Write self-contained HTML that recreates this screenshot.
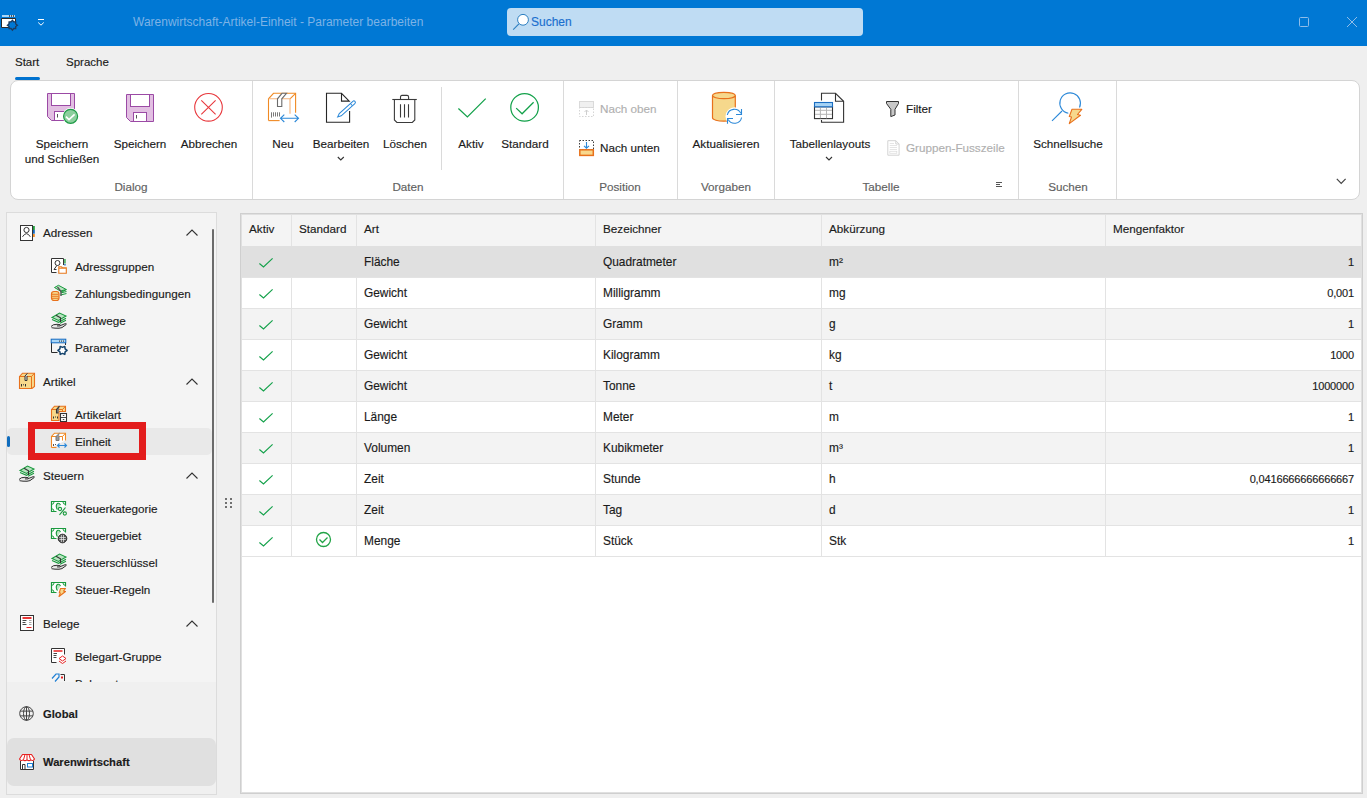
<!DOCTYPE html>
<html><head><meta charset="utf-8">
<style>
*{margin:0;padding:0;box-sizing:border-box}
html,body{width:1367px;height:798px;overflow:hidden;background:#efefef;font-family:"Liberation Sans",sans-serif;color:#1b1b1b}
.a{position:absolute}
.t{position:absolute;white-space:nowrap;font-size:11.7px;line-height:12px;height:12px;-webkit-text-stroke:0.15px currentColor}
.c{text-align:center;width:160px}
.g{color:#616161}
.d{color:#b0b0b0}
svg{position:absolute;overflow:visible}
#title{left:0;top:0;width:1367px;height:46px;background:#0078d4}
#ribbon{left:10px;top:80px;width:1350px;height:120px;background:#fff;border:1px solid #d4d4d4;border-radius:8px}
.vs{position:absolute;width:1px;background:#dadada}
#side{left:6px;top:212px;width:211px;height:583px;background:#f4f4f4;border:1px solid #dcdcdc}
#grid{left:240px;top:213px;width:1123px;height:581px;background:#fff;border:1px solid #cfcfcf;box-shadow:inset 0 0 0 1px #e0e0e0}
.row{position:absolute;left:242px;width:1119px;height:31px;border-bottom:1px solid #e3e3e3}
.cs{position:absolute;width:1px;background:#e3e3e3}
</style></head><body>
<!-- TITLE BAR -->
<div id="title" class="a"></div>
<div class="t" style="left:133px;top:16px;color:#7db3e6;font-size:12px;-webkit-text-stroke:0">Warenwirtschaft-Artikel-Einheit - Parameter bearbeiten</div>
<div class="a" style="left:507px;top:8px;width:356px;height:28px;background:#bfdcf3;border-radius:4px"></div>
<div class="t" style="left:531px;top:16px;color:#1a6fcf;font-size:12px">Suchen</div>

<!-- TABS -->
<div class="t" style="left:15px;top:56px;font-size:11.5px">Start</div>
<div class="t" style="left:66px;top:56px;font-size:11.5px">Sprache</div>
<div class="a" style="left:15px;top:77px;width:25px;height:3px;background:#0072cf;border-radius:2px"></div>

<!-- RIBBON -->
<div id="ribbon" class="a"></div>
<div class="vs" style="left:252px;top:81px;height:118px"></div>
<div class="vs" style="left:563px;top:81px;height:118px"></div>
<div class="vs" style="left:677px;top:81px;height:118px"></div>
<div class="vs" style="left:774px;top:81px;height:118px"></div>
<div class="vs" style="left:1018px;top:81px;height:118px"></div>
<div class="vs" style="left:1116px;top:81px;height:118px"></div>
<div class="vs" style="left:441px;top:87px;height:83px"></div>

<div class="t c" style="left:-18px;top:138px">Speichern</div>
<div class="t c" style="left:-18px;top:153px">und Schließen</div>
<div class="t c" style="left:60px;top:138px">Speichern</div>
<div class="t c" style="left:129px;top:138px">Abbrechen</div>
<div class="t c g" style="left:51px;top:181px">Dialog</div>
<div class="t c" style="left:203px;top:138px">Neu</div>
<div class="t c" style="left:261px;top:138px">Bearbeiten</div>
<div class="t c" style="left:325px;top:138px">Löschen</div>
<div class="t c" style="left:391px;top:138px">Aktiv</div>
<div class="t c" style="left:445px;top:138px">Standard</div>
<div class="t c g" style="left:328px;top:181px">Daten</div>
<div class="t d" style="left:600px;top:103px">Nach oben</div>
<div class="t" style="left:600px;top:142px">Nach unten</div>
<div class="t c g" style="left:540px;top:181px">Position</div>
<div class="t c" style="left:646px;top:138px">Aktualisieren</div>
<div class="t c g" style="left:646px;top:181px">Vorgaben</div>
<div class="t c" style="left:750px;top:138px">Tabellenlayouts</div>
<div class="t" style="left:906px;top:103px">Filter</div>
<div class="t d" style="left:906px;top:142px">Gruppen-Fusszeile</div>
<div class="t c g" style="left:801px;top:181px">Tabelle</div>
<div class="t c" style="left:988px;top:138px">Schnellsuche</div>
<div class="t c g" style="left:988px;top:181px">Suchen</div>

<svg class="a" style="left:0;top:0" width="1367" height="798" viewBox="0 0 1367 798" shape-rendering="geometricPrecision">
<!-- app icon -->
<rect x="2" y="15" width="13" height="2" fill="#a9d6f7"/>
<rect x="9" y="15" width="1" height="2" fill="#555"/><rect x="11" y="15" width="1" height="2" fill="#555"/><rect x="13" y="15" width="1" height="2" fill="#555"/>
<path d="M1.5 18.5 H15.5 V27.5 H1.5 Z" fill="#fff" stroke="#2a2a2a" stroke-width="1"/>
<g transform="translate(12.4 25.2)">
<circle r="4.3" fill="#0078d4"/>
<path d="M0 -5 L1.3 -3.3 L3.3 -3.3 L3.3 -1.3 L5 0 L3.3 1.3 L3.3 3.3 L1.3 3.3 L0 5 L-1.3 3.3 L-3.3 3.3 L-3.3 1.3 L-5 0 L-3.3 -1.3 L-3.3 -3.3 L-1.3 -3.3 Z" fill="none" stroke="#1d3b5e" stroke-width="1.3"/>
<circle r="1.6" fill="#0078d4"/>
</g>
<!-- quick access dropdown -->
<path d="M38 19.5 H44" stroke="#fff" stroke-width="1"/>
<path d="M38.2 22.5 L41 25.2 L43.8 22.5" fill="none" stroke="#fff" stroke-width="1"/>
<!-- search magnifier -->
<circle cx="523" cy="19.8" r="5.4" fill="#fff" stroke="#2d7fc1" stroke-width="1"/>
<path d="M518.9 23.9 L513.2 29.6" stroke="#2d7fc1" stroke-width="1.1"/>
<!-- window controls -->
<rect x="1299.5" y="17.5" width="9" height="9" rx="1" fill="none" stroke="#8fbde9" stroke-width="1"/>
<path d="M1347 17 L1357 27 M1357 17 L1347 27" stroke="#8fbde9" stroke-width="1"/>

<!-- floppy 1 -->
<g transform="translate(47 93)" stroke="#9b4aa5" stroke-width="1">
<path d="M0.5 0.5 H27.5 V27.5 H4.5 L0.5 23.5 Z" fill="#e2bfe2"/>
<rect x="4.5" y="0.5" width="19" height="12" fill="#fff"/>
<rect x="7.5" y="18.5" width="13" height="9" fill="#fff"/>
<path d="M10.5 21 V24.5" stroke="#555"/>
</g>
<circle cx="70.6" cy="116.3" r="8.2" fill="#fff"/>
<circle cx="70.6" cy="116.3" r="7" fill="#8ccf9d" stroke="#1c9a45" stroke-width="1.2"/>
<path d="M66 116.6 L69 119.6 L74.6 114.3" fill="none" stroke="#fff" stroke-width="1.6"/>
<!-- floppy 2 -->
<g transform="translate(126 94)" stroke="#9b4aa5" stroke-width="1">
<path d="M0.5 0.5 H27.5 V27.5 H4.5 L0.5 23.5 Z" fill="#e2bfe2"/>
<rect x="4.5" y="0.5" width="19" height="12" fill="#fff"/>
<rect x="7.5" y="18.5" width="13" height="9" fill="#fff"/>
<path d="M10.5 21 V24.5" stroke="#555"/>
</g>
<!-- abbrechen -->
<circle cx="208.5" cy="107.3" r="13.8" fill="none" stroke="#e8383d" stroke-width="1.1"/>
<path d="M201.3 100.3 L215.6 114.3 M215.6 100.3 L201.3 114.3" stroke="#e8383d" stroke-width="1.1"/>

<!-- neu -->
<g transform="translate(263 88)" fill="none" stroke-width="1.1">
<path d="M5.5 32.6 V10.8 L10.5 5.3 H32.6 V24.8" stroke="#f08a24"/>
<path d="M32.6 5.3 L27 10.8" stroke="#f08a24"/>
<path d="M5.5 10.8 H27 V25.7" stroke="#f5b47c"/>
<path d="M5.5 32.6 H16.6" stroke="#f08a24"/>
<path d="M19 5.3 H23.5 L18.8 10.8 V18.5 H14.5 V10.8 Z" stroke="#6b6b6b" fill="#fff"/>
<path d="M8.5 24.3 V29.6 M10.5 24.3 V28.5 M12.5 24.3 V28.5 M14.5 24.3 V28.5 M16.5 24.3 V28.5" stroke="#6b6b6b" stroke-width="0.9"/>
<path d="M17.5 30.3 H35.5 M21.3 26.6 L17.5 30.3 L21.3 34 M31.7 26.6 L35.5 30.3 L31.7 34" stroke="#2b88d8" stroke-width="1.1"/>
</g>
<!-- bearbeiten -->
<g transform="translate(320 88)" fill="none">
<path d="M29.6 23 V34.3 H6.5 V5.3 H21.5 L29.2 13.1 H21.5 V5.3" stroke="#262626" stroke-width="1.1"/>
<g transform="translate(26.2 21.3) rotate(-42)">
<path d="M-11.5 0 L-8 -1.5 H10.3 A1.5 1.5 0 0 1 10.3 1.5 H-8 Z" stroke="#2b88d8" stroke-width="1" fill="#fff"/>
<path d="M7 -1.5 V1.5" stroke="#2b88d8" stroke-width="1"/>
</g>
</g>
<!-- loeschen -->
<g transform="translate(385 88)" fill="none" stroke="#3a3a3a" stroke-width="1.1">
<path d="M7.3 11.5 H31.8"/>
<path d="M15.5 11.5 V9 Q15.5 7.4 17 7.4 H22 Q23.6 7.4 23.6 9 V11.5"/>
<path d="M9.4 11.5 V32 L11.9 34.5 H27.3 L29.8 32 V11.5"/>
<path d="M15.5 16.3 V29.6 M19.5 16.3 V29.6 M23.5 16.3 V29.6"/>
</g>
<!-- aktiv -->
<path d="M458.4 108.5 L467.4 117 L485.7 98.6" fill="none" stroke="#13a14a" stroke-width="1.25"/>
<!-- standard -->
<circle cx="524.6" cy="107.4" r="13.8" fill="none" stroke="#13a14a" stroke-width="1.25"/>
<path d="M516.2 108.1 L522.1 113.8 L533.6 102.3" fill="none" stroke="#13a14a" stroke-width="1.25"/>

<!-- nach oben (disabled) -->
<rect x="579.5" y="101.5" width="14" height="6" fill="#f0f0f0" stroke="#dadada" stroke-width="1"/>
<rect x="579.5" y="107.5" width="14" height="9" fill="none" stroke="#d5d5d5" stroke-width="1" stroke-dasharray="1.5 1.5"/>
<path d="M586.5 115 V110 M584.5 112 L586.5 110 L588.5 112" fill="none" stroke="#cfcfcf" stroke-width="1"/>
<!-- nach unten -->
<rect x="579.5" y="140.5" width="14" height="9" fill="none" stroke="#404040" stroke-width="1" stroke-dasharray="1.5 1.5"/>
<path d="M586.5 142 V148 M584 145.8 L586.5 148.2 L589 145.8" fill="none" stroke="#2b88d8" stroke-width="1.1"/>
<rect x="579.8" y="149.8" width="13.5" height="5.6" fill="#f8d88d" stroke="#e8711c" stroke-width="1.5"/>

<!-- aktualisieren -->
<g transform="translate(705 88)">
<path d="M7.5 7.5 V29.8 A11.4 3.4 0 0 0 30.3 29.8 V7.5" fill="#f6d88c" stroke="#e8711c" stroke-width="1.2"/>
<ellipse cx="18.9" cy="7.5" rx="11.4" ry="3.2" fill="#f6d88c" stroke="#e8711c" stroke-width="1.2"/>
<circle cx="29.5" cy="28.3" r="9" fill="#fff"/>
<path d="M22.3 27 A7.2 7.2 0 0 1 35.8 25.3" fill="none" stroke="#2b88d8" stroke-width="1.1"/>
<path d="M36.5 21 V26.5 H31" fill="none" stroke="#2b88d8" stroke-width="1.1"/>
<path d="M36.6 29.5 A7.2 7.2 0 0 1 23.2 31.5" fill="none" stroke="#2b88d8" stroke-width="1.1"/>
<path d="M22.5 35.8 V30.5 H28" fill="none" stroke="#2b88d8" stroke-width="1.1"/>
</g>

<!-- tabellenlayouts -->
<g transform="translate(808 88)" fill="none">
<path d="M13.5 12.5 V5.3 H27.5 L35.6 13.3 V34.3 H13.5 V32" stroke="#333" stroke-width="1.1"/>
<path d="M27.5 5.3 V13.3 H35.3" stroke="#333" stroke-width="1.1"/>
<rect x="6.5" y="18.8" width="18" height="11.8" fill="#fff" stroke="#333" stroke-width="1.1"/>
<path d="M12.4 19 V30.3 M18.5 19 V30.3 M7 22.3 H24 M7 26.3 H24" stroke="#b5b5b5" stroke-width="1"/>
<rect x="6.5" y="14.5" width="18" height="4.3" fill="#a6d3f5" stroke="#1b6ec2" stroke-width="1.1"/>
</g>
<!-- filter -->
<path d="M886.5 101.5 H898.5 V103.5 L895 109.3 V115 L890.8 116.6 V109.3 L886.5 103.5 Z" fill="#c8c8c8" stroke="#333" stroke-width="1"/>
<!-- gruppen-fusszeile disabled -->
<path d="M887.8 140.7 H895.8 L899.1 144 V155.2 H887.8 Z M895.8 140.7 V144 H899.1" fill="none" stroke="#d3d3d3" stroke-width="1"/>
<path d="M889.8 143.5 H894 M889.8 145.5 H897 M889.8 147.5 H897 M889.8 149.5 H897" stroke="#dedede" stroke-width="0.8"/>
<rect x="889.8" y="151.3" width="7" height="2" fill="none" stroke="#dedede" stroke-width="0.8"/>
<!-- dialog launcher -->
<path d="M996 182.5 H1002 M996 184.5 H1000 M996 186.5 H1002" stroke="#555" stroke-width="1"/>

<!-- schnellsuche -->
<g transform="translate(1046 88)" fill="none">
<path d="M22.3 25.3 A10.3 10.3 0 1 1 33.5 19.5" stroke="#2b88d8" stroke-width="1.1"/>
<path d="M16 23 L6 32.8" stroke="#2b88d8" stroke-width="1.1"/>
<path d="M26 21.3 H35.8 L31.5 26.5 L34.5 27.3 L23.3 35.6 L25.5 29 L23.3 28.5 Z" fill="#f6d88c" stroke="#e8711c" stroke-width="1.1" stroke-linejoin="round"/>
</g>
<!-- chevrons -->
<path d="M337.8 157 L340.8 160 L343.8 157" fill="none" stroke="#333" stroke-width="1.1"/>
<path d="M826 157 L829 160 L832 157" fill="none" stroke="#333" stroke-width="1.1"/>
<path d="M1336.8 178.8 L1341.2 183.4 L1345.6 178.8" fill="none" stroke="#444" stroke-width="1.2"/>
</svg>

<!-- SIDEBAR -->
<div id="side" class="a"></div>
<div class="a" style="left:7px;top:682px;width:209px;height:112px;background:#f0f0f0"></div>
<div class="a" style="left:7px;top:738px;width:209px;height:48px;background:#e0e0e0;border-radius:7px"></div>
<div class="a" style="left:7px;top:428px;width:205px;height:27px;background:#e9e9e9;border-radius:5px"></div>
<div class="a" style="left:7px;top:436px;width:3px;height:11px;background:#0f6cbd;border-radius:2px"></div>
<div class="a" style="left:212px;top:229px;width:2px;height:374px;background:#6b6b6b;border-radius:1px"></div>
<div class="t" style="left:43px;top:227px">Adressen</div>
<div class="t" style="left:75px;top:261px">Adressgruppen</div>
<div class="t" style="left:75px;top:288px">Zahlungsbedingungen</div>
<div class="t" style="left:75px;top:315px">Zahlwege</div>
<div class="t" style="left:75px;top:342px">Parameter</div>
<div class="t" style="left:43px;top:376px">Artikel</div>
<div class="t" style="left:75px;top:409px">Artikelart</div>
<div class="t" style="left:75px;top:436px">Einheit</div>
<div class="t" style="left:43px;top:469.5px">Steuern</div>
<div class="t" style="left:75px;top:503px">Steuerkategorie</div>
<div class="t" style="left:75px;top:530px">Steuergebiet</div>
<div class="t" style="left:75px;top:557px">Steuerschlüssel</div>
<div class="t" style="left:75px;top:584px">Steuer-Regeln</div>
<div class="t" style="left:43px;top:617.5px">Belege</div>
<div class="t" style="left:75px;top:651px">Belegart-Gruppe</div>
<div class="a" style="left:7px;top:672px;width:205px;height:10px;overflow:hidden"><div class="t" style="left:68px;top:6px">Belegart</div></div>
<div class="t" style="left:43px;top:708px;font-weight:bold;font-size:11.2px">Global</div>
<div class="t" style="left:43px;top:756px;font-weight:bold;font-size:11.2px">Warenwirtschaft</div>
<svg class="a" style="left:0;top:0" width="1367" height="798" viewBox="0 0 1367 798">
<!-- Adressen header icon -->
<g transform="translate(15 220)">
<rect x="5.5" y="5.5" width="12" height="15" fill="#fff" stroke="#333" stroke-width="1"/>
<circle cx="11.5" cy="10" r="2.6" fill="none" stroke="#333" stroke-width="1"/>
<path d="M7.5 16.8 Q11.5 10.5 15.3 16.8" fill="none" stroke="#333" stroke-width="1"/>
<rect x="18" y="6" width="1.8" height="4" fill="#1f9d3e"/>
<rect x="18" y="10" width="1.8" height="3.7" fill="#1168c0"/>
<rect x="18" y="14" width="1.8" height="3" fill="#f08a24"/>
</g>
<!-- Adressgruppen -->
<g transform="translate(47 255)">
<path d="M9.5 17.5 H4.5 V3.5 H16.5 V10" fill="#fff" stroke="#333" stroke-width="1"/>
<circle cx="10.5" cy="8" r="2.5" fill="none" stroke="#333" stroke-width="1"/>
<path d="M9.8 10.6 L7 14.5 H9.5" fill="none" stroke="#333" stroke-width="1"/>
<rect x="17.3" y="4" width="1.3" height="4.5" fill="#1f9d3e"/>
<rect x="17.3" y="9" width="1.3" height="1.5" fill="#1168c0"/>
<path d="M11.8 18.3 V11.8 H14.5 L15.5 12.8 H19.3 V18.3 Z M11.8 13.2 H19.3" fill="#fff" stroke="#e8781c" stroke-width="1.1"/>
</g>
<!-- Zahlungsbedingungen -->
<g transform="translate(47 282)">
<path d="M7.5 5.5 L11.5 3.3 L19.3 7.5 L15 10 Z" fill="#b9e3c1" stroke="#1a9a3e" stroke-width="1"/>
<path d="M13.5 9 L19.5 7.5 M13.5 11 L19.5 9.5 M13.5 13 L19.5 11.5" stroke="#1a9a3e" stroke-width="1.1"/>
<path d="M10.5 5 L14 9.5 V14" stroke="#555" stroke-width="1.3" fill="none"/>
<rect x="4.5" y="9.5" width="7.5" height="9" rx="2.5" fill="#f7d58a" stroke="#e8711c" stroke-width="1.2"/>
<path d="M5 12.3 H11.5 M5 14.3 H11.5 M5 16.3 H11.5" stroke="#e8711c" stroke-width="0.9"/>
</g>
<!-- Zahlwege -->
<g transform="translate(47 309)">
<path d="M5 8.5 L12.5 4 L19 7 L11.5 11.5 Z" fill="#b9e3c1" stroke="#1a9a3e" stroke-width="1.1"/>
<path d="M5 10.5 L11.5 13.3 L19 9.3 M19 11.3 L13 14.3" fill="none" stroke="#1a9a3e" stroke-width="1.1"/>
<path d="M9 6.3 L13.5 8.8 V13" fill="none" stroke="#333" stroke-width="1.1"/>
<path d="M4 17.5 Q6 15 10 15.3 L13 15.6 Q14.3 16.2 13 16.9 H10 M13.2 16.6 L18.3 14.6 Q20 14.4 19 15.7 L15 18.6 Q12.5 19.6 8 19.2 L4.5 18.7" fill="#ddd" stroke="#333" stroke-width="1"/>
</g>
<!-- Parameter -->
<g transform="translate(47 336)">
<path d="M4.5 6.5 V16.5 H10.5 M18.5 6.5 V9" fill="none" stroke="#2a2a2a" stroke-width="1"/>
<rect x="4.2" y="3.2" width="14.6" height="3.6" fill="#a9d6f7" stroke="#1168c0" stroke-width="1"/>
<path d="M12.5 4.3 V6 M14.5 4.3 V6 M16.5 4.3 V6" stroke="#555" stroke-width="0.8"/>
<g transform="translate(15.5 14.4)"><path d="M4.60 0.00 L2.60 1.50 L2.30 3.98 L0.00 3.00 L-2.30 3.98 L-2.60 1.50 L-4.60 0.00 L-2.60 -1.50 L-2.30 -3.98 L-0.00 -3.00 L2.30 -3.98 L2.60 -1.50 Z" fill="#fff" stroke="#11416b" stroke-width="1.5" stroke-linejoin="round"/><circle r="1.5" fill="#fff"/></g>
</g>
<!-- Artikel header -->
<g transform="translate(15 368)">
<path d="M4.5 8.5 L7.5 5.2 H19.5 V18.5 L17 20.5 H4.5 Z" fill="#f7d98b" stroke="#e8711c" stroke-width="1.1"/>
<path d="M4.5 8.5 H16.5 V20.5 M16.5 8.5 L19.5 5.2" fill="none" stroke="#e8711c" stroke-width="1"/>
<path d="M12.5 5.2 L10 8 V12.5 H12 V8" fill="#ddd" stroke="#333" stroke-width="1"/>
<path d="M6.5 16 V18.5 M8.5 16.3 V17.3 M10.5 16 V18.5" stroke="#333" stroke-width="1"/>
</g>
<!-- Artikelart -->
<g transform="translate(47 402)">
<path d="M4.5 7.5 L7.5 4.2 H18.5 V9.5 H12 V18.5 H4.5 Z" fill="#f7d98b" stroke="#e8711c" stroke-width="1.1"/>
<path d="M4.5 7.5 H15.5 V9.5 M15.5 7.5 L18.5 4.2" fill="none" stroke="#e8711c" stroke-width="1"/>
<path d="M12.5 4.2 L9.5 7.5 V11 H11.5" fill="#777" stroke="#333" stroke-width="1.1"/>
<path d="M6.5 14.5 V16.5 M8.5 14.5 V15.5 M10.5 14.5 V16.5" stroke="#333" stroke-width="1"/>
<rect x="13.5" y="11.5" width="6" height="8" fill="#fff" stroke="#333" stroke-width="1.1"/>
<path d="M13.5 15.5 H19.5 M15.8 13.5 H17.3 M15.8 17.5 H17.3" stroke="#333" stroke-width="0.9"/>
</g>
<!-- Einheit -->
<g transform="translate(47 429)">
<path d="M4.5 18.5 V7.5 L7.5 4.2 H18.5 V11.5" fill="#fff" stroke="#f08a24" stroke-width="1.1"/>
<path d="M4.5 7.5 H15.5 V11.5 M15.5 7.5 L18.5 4.2" fill="none" stroke="#f08a24" stroke-width="1"/>
<path d="M4.5 18.5 H9.5" stroke="#f08a24" stroke-width="1.1"/>
<path d="M12.5 4.2 L9 7.5 V11.5 H12 V7.5" fill="#999" stroke="#777" stroke-width="1"/>
<path d="M6.5 15 V17 M8.5 15 V16" stroke="#555" stroke-width="1"/>
<path d="M10.5 16.5 H19.5 M12.5 14.5 L10.5 16.5 L12.5 18.5 M17.5 14.5 L19.5 16.5 L17.5 18.5" fill="none" stroke="#2b88d8" stroke-width="1.1"/>
</g>
<!-- Steuern header -->
<g transform="translate(15 462)">
<path d="M5 8.5 L12.5 4 L19 7 L11.5 11.5 Z" fill="#b9e3c1" stroke="#1a9a3e" stroke-width="1.1"/>
<path d="M5 10.5 L11.5 13.3 L19 9.3 M19 11.3 L13 14.3" fill="none" stroke="#1a9a3e" stroke-width="1.1"/>
<path d="M9 6.3 L13.5 8.8 V13" fill="none" stroke="#333" stroke-width="1.1"/>
<path d="M4 17.5 Q6 15 10 15.3 L13 15.6 Q14.3 16.2 13 16.9 H10 M13.2 16.6 L18.3 14.6 Q20 14.4 19 15.7 L15 18.6 Q12.5 19.6 8 19.2 L4.5 18.7" fill="#ddd" stroke="#333" stroke-width="1"/>
</g>
<!-- money bill base (reused) -->

<!-- Steuerkategorie -->
<g transform="translate(47 496)">
<path d="M9.5 15.5 H4.5 V5.5 H18.5 V9.5" fill="#fff" stroke="#1a9a3e" stroke-width="1.2"/>
<path d="M4.8 8.3 Q7 8.3 7 6 M16 6 Q16 8.3 18.3 8.3 M4.8 12.8 Q7 12.8 7 15.3" fill="none" stroke="#1a9a3e" stroke-width="1"/>
<path d="M13.5 9 Q12.5 7 11 7.3 Q9 7.8 9.3 11 Q9.6 12.8 10.5 13.5" fill="#b9e3c1" stroke="#1a9a3e" stroke-width="1.1"/>
<circle cx="13" cy="13" r="1.6" fill="none" stroke="#1a9a3e" stroke-width="1.1"/>
<circle cx="17.8" cy="17.5" r="1.6" fill="none" stroke="#1a9a3e" stroke-width="1.1"/>
<path d="M12.5 18.8 L18.5 11.5" stroke="#1a9a3e" stroke-width="1.1"/>
</g>
<!-- Steuergebiet -->
<g transform="translate(47 523)">
<path d="M9.5 15.5 H4.5 V5.5 H18.5 V9.5" fill="#fff" stroke="#1a9a3e" stroke-width="1.2"/>
<path d="M4.8 8.3 Q7 8.3 7 6 M16 6 Q16 8.3 18.3 8.3 M4.8 12.8 Q7 12.8 7 15.3" fill="none" stroke="#1a9a3e" stroke-width="1"/>
<path d="M13.5 9 Q12.5 7 11 7.3 Q9 7.8 9.3 11 Q9.6 12.8 10.5 13.5" fill="#b9e3c1" stroke="#1a9a3e" stroke-width="1.1"/>
<circle cx="15.5" cy="15.5" r="4.3" fill="#555" stroke="#2a2a2a" stroke-width="1"/>
<path d="M12.3 14.5 H18.8 M12.3 16.5 H18.8 M14.4 11.8 V19.2 M16.5 11.8 V19.2" stroke="#eee" stroke-width="0.7"/>
</g>
<!-- Steuerschlüssel -->
<g transform="translate(47 550)">
<path d="M5 8.5 L12.5 4 L19 7 L11.5 11.5 Z" fill="#b9e3c1" stroke="#1a9a3e" stroke-width="1.1"/>
<path d="M5 10.5 L11.5 13.3 L19 9.3 M19 11.3 L13 14.3" fill="none" stroke="#1a9a3e" stroke-width="1.1"/>
<path d="M9 6.3 L13.5 8.8 V13" fill="none" stroke="#333" stroke-width="1.1"/>
<path d="M4 17.5 Q6 15 10 15.3 L13 15.6 Q14.3 16.2 13 16.9 H10 M13.2 16.6 L18.3 14.6 Q20 14.4 19 15.7 L15 18.6 Q12.5 19.6 8 19.2 L4.5 18.7" fill="#ddd" stroke="#333" stroke-width="1"/>
</g>
<!-- Steuer-Regeln -->
<g transform="translate(47 577)">
<path d="M9.5 15.5 H4.5 V5.5 H18.5 V9.5" fill="#fff" stroke="#1a9a3e" stroke-width="1.2"/>
<path d="M4.8 8.3 Q7 8.3 7 6 M16 6 Q16 8.3 18.3 8.3 M4.8 12.8 Q7 12.8 7 15.3" fill="none" stroke="#1a9a3e" stroke-width="1"/>
<path d="M13.5 9 Q12.5 7 11 7.3 Q9 7.8 9.3 11 Q9.6 12.8 10.5 13.5" fill="#b9e3c1" stroke="#1a9a3e" stroke-width="1.1"/>
<path d="M13.5 11.5 H18.5 L16.5 14 L18.5 14.5 L12 19.5 L13.3 16 L12.3 15.8 Z" fill="#f6d88c" stroke="#e8711c" stroke-width="1.1" stroke-linejoin="round"/>
</g>
<!-- Belege header -->
<g transform="translate(15 610)">
<rect x="5.5" y="5.5" width="13" height="15" fill="#fff" stroke="#333" stroke-width="1"/>
<path d="M7.5 8 H16.5" stroke="#e82020" stroke-width="1.8"/>
<path d="M7.5 10.5 H11.5 M7.5 12.5 H10.5 M7.5 14.5 H11.5" stroke="#333" stroke-width="0.9"/>
<path d="M14 10.5 H16.5 M14 12.5 H16.5 M14 14.5 H16.5" stroke="#999" stroke-width="0.9"/>
<path d="M11.5 17.5 H16.5" stroke="#e82020" stroke-width="1"/>
</g>
<!-- Belegart-Gruppe -->
<g transform="translate(47 644)">
<path d="M9.5 18.5 H4.5 V4.5 H17.5 V10.5" fill="#fff" stroke="#333" stroke-width="1"/>
<path d="M6.5 7 H15.5" stroke="#e82020" stroke-width="1.5"/>
<path d="M6.5 9.5 H10 M6.5 11.5 H9.5 M6.5 13.5 H9.5" stroke="#333" stroke-width="0.9"/>
<path d="M15.5 12 L19 14.5 L15.5 17 L12 14.5 Z M12 17 L15.5 19.5 L19 17" fill="#fff" stroke="#e82020" stroke-width="1"/>
</g>
<!-- Belegart clipped -->
<g transform="translate(47 671)">
<path d="M5 7.5 L9 3 H12 V6 L8 10.5" fill="none" stroke="#1f7fd4" stroke-width="1.2"/>
<path d="M13.5 3.5 H17.5 V10" fill="none" stroke="#333" stroke-width="1"/>
<rect x="14" y="5.5" width="2" height="2" fill="#e82020"/>
</g>
<!-- Global -->
<g transform="translate(26.5 713.5)" fill="none" stroke="#444" stroke-width="1">
<circle r="6.8"/>
<ellipse rx="3" ry="6.8"/>
<path d="M0 -6.8 V6.8 M-6.3 -2.4 H6.3 M-6.3 2.4 H6.3"/>
</g>
<!-- Warenwirtschaft store -->
<g transform="translate(19 753)">
<path d="M1.5 8 V16.5 H14.5 V8" fill="#fff" stroke="#333" stroke-width="1"/>
<path d="M3.5 16.5 V11.5 H6 V16.5" fill="none" stroke="#333" stroke-width="1"/>
<rect x="8.5" y="10.5" width="5" height="3.5" fill="#fff" stroke="#1f7fd4" stroke-width="1"/>
<path d="M3.5 1.5 H12.5 L15.5 6 Q14 8.5 12 6.8 Q10 8.5 8 6.8 Q6 8.5 4 6.8 Q2 8.5 0.5 6 Z" fill="#fff" stroke="#e82020" stroke-width="1.1" stroke-linejoin="round"/>
<path d="M6 1.5 L4.5 6.8 M10 1.5 L11.5 6.8 M8 1.5 V6.8" stroke="#e82020" stroke-width="1"/>
</g>
<!-- sidebar chevrons -->
<path d="M186.5 235.5 L192 230 L197.5 235.5 M186.5 384.5 L192 379 L197.5 384.5 M186.5 478.5 L192 473 L197.5 478.5 M186.5 626.5 L192 621 L197.5 626.5" fill="none" stroke="#333" stroke-width="1.1"/>
</svg>

<div class="a" style="left:28px;top:422px;width:118px;height:38px;border:7px solid #e31c1c"></div>

<!-- GRID -->
<div id="grid" class="a"></div>
<div class="a" style="left:242px;top:215px;width:1119px;height:31px;background:#f4f4f4"></div>
<div class="a" style="left:242px;width:1119px;height:31px;top:246px;background:#e0e0e0"></div>
<div class="a" style="left:242px;width:1119px;height:31px;top:277px;background:#ffffff"></div>
<div class="a" style="left:242px;width:1119px;height:31px;top:308px;background:#f3f3f3"></div>
<div class="a" style="left:242px;width:1119px;height:31px;top:339px;background:#ffffff"></div>
<div class="a" style="left:242px;width:1119px;height:31px;top:370px;background:#f3f3f3"></div>
<div class="a" style="left:242px;width:1119px;height:31px;top:401px;background:#ffffff"></div>
<div class="a" style="left:242px;width:1119px;height:31px;top:432px;background:#f3f3f3"></div>
<div class="a" style="left:242px;width:1119px;height:31px;top:463px;background:#ffffff"></div>
<div class="a" style="left:242px;width:1119px;height:31px;top:494px;background:#f3f3f3"></div>
<div class="a" style="left:242px;width:1119px;height:31px;top:525px;background:#ffffff"></div>
<div class="a" style="left:242px;width:1119px;height:1px;top:277px;background:#e3e3e3"></div><div class="a" style="left:242px;width:1119px;height:1px;top:308px;background:#e3e3e3"></div><div class="a" style="left:242px;width:1119px;height:1px;top:339px;background:#e3e3e3"></div><div class="a" style="left:242px;width:1119px;height:1px;top:370px;background:#e3e3e3"></div><div class="a" style="left:242px;width:1119px;height:1px;top:401px;background:#e3e3e3"></div><div class="a" style="left:242px;width:1119px;height:1px;top:432px;background:#e3e3e3"></div><div class="a" style="left:242px;width:1119px;height:1px;top:463px;background:#e3e3e3"></div><div class="a" style="left:242px;width:1119px;height:1px;top:494px;background:#e3e3e3"></div><div class="a" style="left:242px;width:1119px;height:1px;top:525px;background:#e3e3e3"></div><div class="a" style="left:242px;width:1119px;height:1px;top:556px;background:#e3e3e3"></div>
<div class="cs" style="left:291px;top:215px;height:31px"></div>
<div class="cs" style="left:291px;top:277px;height:279px"></div>
<div class="cs" style="left:356px;top:215px;height:31px"></div>
<div class="cs" style="left:356px;top:277px;height:279px"></div>
<div class="cs" style="left:595px;top:215px;height:31px"></div>
<div class="cs" style="left:595px;top:277px;height:279px"></div>
<div class="cs" style="left:821px;top:215px;height:31px"></div>
<div class="cs" style="left:821px;top:277px;height:279px"></div>
<div class="cs" style="left:1105px;top:215px;height:31px"></div>
<div class="cs" style="left:1105px;top:277px;height:279px"></div>
<div class="t" style="left:249px;top:223px">Aktiv</div>
<div class="t" style="left:299px;top:223px">Standard</div>
<div class="t" style="left:364px;top:223px">Art</div>
<div class="t" style="left:603px;top:223px">Bezeichner</div>
<div class="t" style="left:829px;top:223px">Abkürzung</div>
<div class="t" style="left:1113px;top:223px">Mengenfaktor</div>
<div class="t" style="left:364px;top:256px;font-size:11.9px">Fläche</div>
<div class="t" style="left:603px;top:256px;font-size:11.9px">Quadratmeter</div>
<div class="t" style="left:829px;top:256px;font-size:11.9px">m²</div>
<div class="t" style="right:13px;letter-spacing:-0.15px;top:256px;font-size:11px">1</div>
<svg style="left:0;top:0" width="1" height="1"><path d="M259.4 263.5 L263.5 267.0 L272.6 258.3" fill="none" stroke="#13a14a" stroke-width="1.15"/></svg>
<div class="t" style="left:364px;top:287px;font-size:11.9px">Gewicht</div>
<div class="t" style="left:603px;top:287px;font-size:11.9px">Milligramm</div>
<div class="t" style="left:829px;top:287px;font-size:11.9px">mg</div>
<div class="t" style="right:13px;letter-spacing:-0.15px;top:287px;font-size:11px">0,001</div>
<svg style="left:0;top:0" width="1" height="1"><path d="M259.4 294.5 L263.5 298.0 L272.6 289.3" fill="none" stroke="#13a14a" stroke-width="1.15"/></svg>
<div class="t" style="left:364px;top:318px;font-size:11.9px">Gewicht</div>
<div class="t" style="left:603px;top:318px;font-size:11.9px">Gramm</div>
<div class="t" style="left:829px;top:318px;font-size:11.9px">g</div>
<div class="t" style="right:13px;letter-spacing:-0.15px;top:318px;font-size:11px">1</div>
<svg style="left:0;top:0" width="1" height="1"><path d="M259.4 325.5 L263.5 329.0 L272.6 320.3" fill="none" stroke="#13a14a" stroke-width="1.15"/></svg>
<div class="t" style="left:364px;top:349px;font-size:11.9px">Gewicht</div>
<div class="t" style="left:603px;top:349px;font-size:11.9px">Kilogramm</div>
<div class="t" style="left:829px;top:349px;font-size:11.9px">kg</div>
<div class="t" style="right:13px;letter-spacing:-0.15px;top:349px;font-size:11px">1000</div>
<svg style="left:0;top:0" width="1" height="1"><path d="M259.4 356.5 L263.5 360.0 L272.6 351.3" fill="none" stroke="#13a14a" stroke-width="1.15"/></svg>
<div class="t" style="left:364px;top:380px;font-size:11.9px">Gewicht</div>
<div class="t" style="left:603px;top:380px;font-size:11.9px">Tonne</div>
<div class="t" style="left:829px;top:380px;font-size:11.9px">t</div>
<div class="t" style="right:13px;letter-spacing:-0.15px;top:380px;font-size:11px">1000000</div>
<svg style="left:0;top:0" width="1" height="1"><path d="M259.4 387.5 L263.5 391.0 L272.6 382.3" fill="none" stroke="#13a14a" stroke-width="1.15"/></svg>
<div class="t" style="left:364px;top:411px;font-size:11.9px">Länge</div>
<div class="t" style="left:603px;top:411px;font-size:11.9px">Meter</div>
<div class="t" style="left:829px;top:411px;font-size:11.9px">m</div>
<div class="t" style="right:13px;letter-spacing:-0.15px;top:411px;font-size:11px">1</div>
<svg style="left:0;top:0" width="1" height="1"><path d="M259.4 418.5 L263.5 422.0 L272.6 413.3" fill="none" stroke="#13a14a" stroke-width="1.15"/></svg>
<div class="t" style="left:364px;top:442px;font-size:11.9px">Volumen</div>
<div class="t" style="left:603px;top:442px;font-size:11.9px">Kubikmeter</div>
<div class="t" style="left:829px;top:442px;font-size:11.9px">m³</div>
<div class="t" style="right:13px;letter-spacing:-0.15px;top:442px;font-size:11px">1</div>
<svg style="left:0;top:0" width="1" height="1"><path d="M259.4 449.5 L263.5 453.0 L272.6 444.3" fill="none" stroke="#13a14a" stroke-width="1.15"/></svg>
<div class="t" style="left:364px;top:473px;font-size:11.9px">Zeit</div>
<div class="t" style="left:603px;top:473px;font-size:11.9px">Stunde</div>
<div class="t" style="left:829px;top:473px;font-size:11.9px">h</div>
<div class="t" style="right:13px;letter-spacing:-0.15px;top:473px;font-size:11px">0,0416666666666667</div>
<svg style="left:0;top:0" width="1" height="1"><path d="M259.4 480.5 L263.5 484.0 L272.6 475.3" fill="none" stroke="#13a14a" stroke-width="1.15"/></svg>
<div class="t" style="left:364px;top:504px;font-size:11.9px">Zeit</div>
<div class="t" style="left:603px;top:504px;font-size:11.9px">Tag</div>
<div class="t" style="left:829px;top:504px;font-size:11.9px">d</div>
<div class="t" style="right:13px;letter-spacing:-0.15px;top:504px;font-size:11px">1</div>
<svg style="left:0;top:0" width="1" height="1"><path d="M259.4 511.5 L263.5 515.0 L272.6 506.3" fill="none" stroke="#13a14a" stroke-width="1.15"/></svg>
<div class="t" style="left:364px;top:535px;font-size:11.9px">Menge</div>
<div class="t" style="left:603px;top:535px;font-size:11.9px">Stück</div>
<div class="t" style="left:829px;top:535px;font-size:11.9px">Stk</div>
<div class="t" style="right:13px;letter-spacing:-0.15px;top:535px;font-size:11px">1</div>
<svg style="left:0;top:0" width="1" height="1"><path d="M259.4 542.5 L263.5 546.0 L272.6 537.3" fill="none" stroke="#13a14a" stroke-width="1.15"/></svg>
<svg style="left:0;top:0" width="1" height="1"><circle cx="323.5" cy="539.5" r="7" fill="none" stroke="#22a447" stroke-width="1.3"/><path d="M319.5 539.5 L322.5 542.5 L327.5 537.5" fill="none" stroke="#22a447" stroke-width="1.3"/></svg>
<div class="a" style="left:225px;top:498px;width:2px;height:2px;background:#707070;box-shadow:5px 0 #707070,0 4px #707070,5px 4px #707070,0 8px #707070,5px 8px #707070"></div>

</body></html>
